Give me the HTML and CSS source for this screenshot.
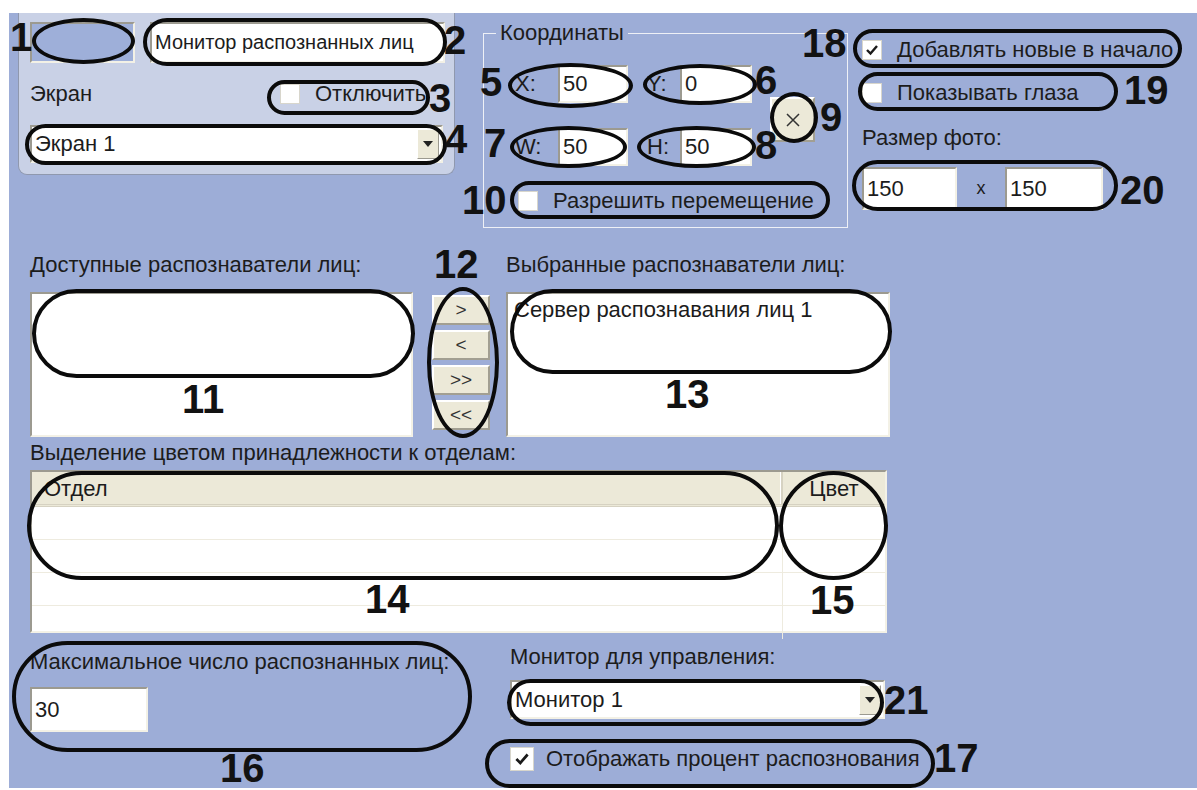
FILE: index.html
```html
<!DOCTYPE html>
<html lang="ru">
<head>
    <meta charset="UTF-8">
    <meta name="viewport" content="width=device-width, initial-scale=1.0">
    <title>Монитор распознанных лиц - настройки</title>
    <link rel="stylesheet" href="styles.css">
</head>
<body>
<div class="page">
    <div class="screen">

        <div class="top">
            <div class="panel">
                <div class="panel-row">
                    <div class="edit edit-id"></div>
                    <div class="edit edit-name">Монитор распознанных лиц</div>
                </div>
                <div class="screen-row">
                    <span class="screen-label">Экран</span>
                    <div class="check"><span class="box"></span>Отключить</div>
                </div>
                <div class="combo combo-screen">
                    <span>Экран 1</span>
                    <span class="drop"><svg width="12" height="8" viewBox="0 0 12 8"><path d="M1 1 L11 1 L6 7 Z" fill="#222"/></svg></span>
                </div>
            </div>

            <fieldset class="coords">
                <legend>Координаты</legend>
                <div class="coords-body">
                    <div class="coords-grid">
                        <span>X:</span><div class="edit">50</div><span class="lbl2">Y:</span><div class="edit">0</div>
                        <span>W:</span><div class="edit">50</div><span class="lbl2">H:</span><div class="edit">50</div>
                    </div>
                    <div class="btn btn-reset"><svg width="18" height="18" viewBox="0 0 18 18"><path d="M3 3 L15 15 M15 3 L3 15" stroke="#333" stroke-width="1.5"/></svg></div>
                </div>
                <div class="check check-move"><span class="box"></span>Разрешить перемещение</div>
            </fieldset>

            <div class="options">
                <div class="check"><span class="box"><svg width="16" height="16" viewBox="0 0 16 16"><path d="M3 8 L6.5 11.5 L13 4" stroke="#1a1a1a" stroke-width="2.4" fill="none"/></svg></span>Добавлять новые в начало</div>
                <div class="check check-eyes"><span class="box"></span>Показывать глаза</div>
                <div class="photo-label">Размер фото:</div>
                <div class="photo-size">
                    <div class="edit edit-w">150</div>
                    <span class="times">x</span>
                    <div class="edit edit-h">150</div>
                </div>
            </div>
        </div>

        <div class="lists">
            <div class="list-col">
                <div class="caption">Доступные распознаватели лиц:</div>
                <div class="listbox"></div>
            </div>
            <div class="move-buttons">
                <div class="btn">&gt;</div>
                <div class="btn">&lt;</div>
                <div class="btn">&gt;&gt;</div>
                <div class="btn">&lt;&lt;</div>
            </div>
            <div class="list-col list-right">
                <div class="caption">Выбранные распознаватели лиц:</div>
                <div class="listbox">
                    <div class="list-item">Сервер распознавания лиц 1</div>
                </div>
            </div>
        </div>

        <div class="dept">
            <div class="caption">Выделение цветом принадлежности к отделам:</div>
            <div class="grid">
                <div class="grid-head">
                    <div class="col-name">Отдел</div>
                    <div class="col-color">Цвет</div>
                </div>
                <div class="grid-row"><div class="col-name"></div><div class="col-color"></div></div>
                <div class="grid-row"><div class="col-name"></div><div class="col-color"></div></div>
                <div class="grid-row"><div class="col-name"></div><div class="col-color"></div></div>
                <div class="grid-row last"><div class="col-name"></div><div class="col-color"></div></div>
            </div>
        </div>

        <div class="bottom">
            <div class="max-col">
                <div class="caption">Максимальное число распознанных лиц:</div>
                <div class="edit edit-max">30</div>
            </div>
            <div class="monitor-col">
                <div class="caption">Монитор для управления:</div>
                <div class="combo combo-monitor">
                    <span>Монитор 1</span>
                    <span class="drop"><svg width="12" height="8" viewBox="0 0 12 8"><path d="M1 1 L11 1 L6 7 Z" fill="#222"/></svg></span>
                </div>
                <div class="check check-percent"><span class="box"><svg width="18" height="18" viewBox="0 0 16 16"><path d="M3 8 L6.5 11.5 L13 4" stroke="#1a1a1a" stroke-width="2.4" fill="none"/></svg></span>Отображать процент распознования</div>
            </div>
        </div>
    </div>

    <!-- annotation marks over the dialog -->
    <div class="marks">
        <div class="ring" style="left:32px;top:18px;width:103px;height:46px"></div>
        <div class="ring pill" style="left:143px;top:18px;width:304px;height:48px"></div>
        <div class="ring pill" style="left:267px;top:80px;width:163px;height:35px"></div>
        <div class="ring pill" style="left:25px;top:124px;width:422px;height:41px"></div>
        <div class="ring" style="left:508px;top:63px;width:125px;height:45px"></div>
        <div class="ring" style="left:643px;top:64px;width:114px;height:41px"></div>
        <div class="ring" style="left:510px;top:126px;width:117px;height:42px"></div>
        <div class="ring" style="left:637px;top:126px;width:119px;height:42px"></div>
        <div class="ring" style="left:770px;top:92px;width:48px;height:51px"></div>
        <div class="ring pill" style="left:510px;top:181px;width:320px;height:38px"></div>
        <div class="ring pill" style="left:32px;top:289px;width:383px;height:89px"></div>
        <div class="ring" style="left:427px;top:287px;width:72px;height:151px"></div>
        <div class="ring pill" style="left:510px;top:289px;width:382px;height:85px"></div>
        <div class="ring pill" style="left:27px;top:471px;width:752px;height:109px"></div>
        <div class="ring" style="left:779px;top:471px;width:109px;height:109px"></div>
        <div class="ring pill" style="left:12px;top:641px;width:460px;height:111px"></div>
        <div class="ring pill" style="left:485px;top:739px;width:450px;height:49px"></div>
        <div class="ring pill" style="left:853px;top:29px;width:329px;height:39px"></div>
        <div class="ring pill" style="left:858px;top:72px;width:260px;height:39px"></div>
        <div class="ring pill" style="left:852px;top:160px;width:266px;height:51px"></div>
        <div class="ring pill" style="left:507px;top:679px;width:377px;height:47px"></div>

        <span class="num" style="left:10px;top:21px">1</span>
        <span class="num" style="left:444px;top:24px">2</span>
        <span class="num" style="left:429px;top:82px">3</span>
        <span class="num" style="left:445px;top:123px">4</span>
        <span class="num" style="left:480px;top:66px">5</span>
        <span class="num" style="left:755px;top:64px">6</span>
        <span class="num" style="left:484px;top:127px">7</span>
        <span class="num" style="left:755px;top:129px">8</span>
        <span class="num" style="left:820px;top:101px">9</span>
        <span class="num" style="left:462px;top:184px">10</span>
        <span class="num" style="left:182px;top:383px">11</span>
        <span class="num" style="left:434px;top:248px">12</span>
        <span class="num" style="left:665px;top:378px">13</span>
        <span class="num" style="left:365px;top:583px">14</span>
        <span class="num" style="left:810px;top:584px">15</span>
        <span class="num" style="left:220px;top:752px">16</span>
        <span class="num" style="left:934px;top:742px">17</span>
        <span class="num" style="left:802px;top:27px">18</span>
        <span class="num" style="left:1124px;top:74px">19</span>
        <span class="num" style="left:1120px;top:174px">20</span>
        <span class="num" style="left:884px;top:684px">21</span>
    </div>
</div>
</body>
</html>
```

FILE: styles.css
```css
body {
    margin: 0;
    background: #fff;
    font-family: "Liberation Sans", Arial, sans-serif;
    font-size: 22px;
    color: #1c1c1c;
}

.page {
    position: relative;
    width: 1197px;
    height: 790px;
    padding: 13px 0 2px 9px;
    box-sizing: border-box;
    overflow: hidden;
}

.screen {
    width: 1188px;
    height: 775px;
    background: #9dadd7;
}

/* common controls */
.edit {
    box-sizing: border-box;
    height: 38px;
    background: #fff;
    border: 2px solid;
    border-color: #9c9a90 #f3f1e6 #f3f1e6 #9c9a90;
    padding: 0 3px;
    display: flex;
    align-items: center;
}

.combo {
    box-sizing: border-box;
    display: flex;
    align-items: center;
    justify-content: space-between;
    background: #fff;
    border: 2px solid;
    border-color: #9c9a90 #f3f1e6 #f3f1e6 #9c9a90;
    padding: 0 2px 0 3px;
}

.drop {
    width: 22px;
    height: 30px;
    box-sizing: border-box;
    background: #ece9d8;
    border: 1px solid;
    border-color: #fff #9c9a90 #9c9a90 #fff;
    display: flex;
    align-items: center;
    justify-content: center;
}

.btn {
    box-sizing: border-box;
    background: #ece9d8;
    border: 2px solid;
    border-color: #fff #a29f92 #a29f92 #fff;
    display: flex;
    align-items: center;
    justify-content: center;
    font-size: 19px;
    color: #333;
}

.check {
    display: flex;
    align-items: center;
    gap: 15px;
    height: 26px;
}

.box {
    width: 20px;
    height: 20px;
    box-sizing: border-box;
    background: #fff;
    border: 1px solid #d8d6cc;
    display: flex;
    align-items: center;
    justify-content: center;
}

.caption {
    height: 24px;
    line-height: 24px;
}

/* top part */
.top {
    display: flex;
    align-items: flex-start;
    height: 237px;
}

.panel {
    margin-left: 9px;
    width: 437px;
    height: 162px;
    box-sizing: border-box;
    background: #c9d1e6;
    border: 1px solid #8f98ae;
    border-top: none;
    border-radius: 0 0 9px 9px;
    padding: 9px 0 0 11px;
}

.panel-row {
    display: flex;
    gap: 15px;
}

.edit-id {
    width: 105px;
    height: 41px;
    background: #9eafd9;
}

.edit-name {
    width: 295px;
    height: 41px;
    font-size: 20px;
}

.screen-row {
    display: flex;
    align-items: center;
    margin-top: 17px;
    height: 28px;
}

.screen-label {
    width: 250px;
}

.combo-screen {
    margin-top: 17px;
    width: 413px;
    height: 38px;
}

.coords {
    margin: 9px 0 0 28px;
    width: 365px;
    height: 206px;
    box-sizing: border-box;
    border: 1px solid #eef0f6;
    padding: 21px 0 0 0;
    min-width: 0;
}

.coords legend {
    margin-left: 12px;
    padding: 0 4px;
    line-height: 22px;
}

.coords-body {
    display: flex;
    align-items: center;
    padding-left: 31px;
}

.coords-grid {
    display: grid;
    grid-template-columns: 43px 70px 52px 72px;
    row-gap: 25px;
    align-items: center;
}

.coords-grid .lbl2 {
    padding-left: 19px;
}

.btn-reset {
    margin: 8px 0 0 18px;
    width: 45px;
    height: 45px;
}

.check-move {
    margin: 22px 0 0 34px;
}

.options {
    margin: 24px 0 0 14px;
}

.check-eyes {
    margin-top: 17px;
}

.photo-label {
    margin-top: 20px;
    line-height: 24px;
}

.photo-size {
    display: flex;
    align-items: center;
    margin-top: 17px;
}

.photo-size .edit {
    height: 43px;
}

.edit-w {
    width: 95px;
}

.edit-h {
    width: 98px;
}

.times {
    width: 48px;
    text-align: center;
    font-size: 18px;
}

/* lists */
.lists {
    display: flex;
    margin-left: 21px;
    padding-top: 3px;
    height: 184px;
    box-sizing: border-box;
}

.list-col {
    width: 383px;
}

.list-right {
    margin-left: 16px;
    width: 384px;
}

.listbox {
    margin-top: 15px;
    height: 145px;
    box-sizing: border-box;
    background: #fff;
    border: 2px solid;
    border-color: #9c9a90 #f3f1e6 #f3f1e6 #9c9a90;
}

.list-item {
    padding: 6px 6px;
    line-height: 20px;
}

.move-buttons {
    margin: 42px 0 0 19px;
    width: 58px;
    display: flex;
    flex-direction: column;
    gap: 5px;
}

.move-buttons .btn {
    height: 30px;
}

/* department colours */
.dept {
    margin-left: 21px;
    padding-top: 7px;
}

.grid {
    margin-top: 5px;
    width: 857px;
    height: 163px;
    box-sizing: border-box;
    background: #fff;
    border: 2px solid;
    border-color: #9c9a90 #f3f1e6 #f3f1e6 #9c9a90;
}

.grid-head,
.grid-row {
    display: flex;
}

.grid-head {
    height: 35px;
    background: #ece9d8;
    border-bottom: 3px double #d6d2c2;
    box-sizing: border-box;
    line-height: 33px;
}

.grid-head .col-name {
    padding-left: 12px;
    border-right: 2px solid #d6d2c2;
    box-shadow: inset -1px 0 0 #fff;
}

.grid-head .col-color {
    text-align: center;
}

.col-name {
    width: 751px;
    box-sizing: border-box;
}

.col-color {
    flex: 1;
}

.grid-row {
    height: 33px;
    box-sizing: border-box;
    border-bottom: 1px solid #eeebdf;
}

.grid-row .col-name {
    border-right: 1px solid #eeebdf;
}

.grid-row.last {
    border-bottom: none;
}

/* bottom part */
.bottom {
    display: flex;
    margin-left: 21px;
}

.max-col {
    width: 480px;
    padding-top: 17px;
}

.edit-max {
    margin-top: 13px;
    width: 118px;
    height: 45px;
}

.monitor-col {
    padding-top: 12px;
}

.combo-monitor {
    margin-top: 11px;
    width: 375px;
    height: 39px;
}

.check-percent {
    margin-top: 27px;
    gap: 12px;
}

.check-percent .box {
    width: 24px;
    height: 24px;
}

/* annotation layer */
.marks {
    position: absolute;
    left: 0;
    top: 0;
    width: 100%;
    height: 100%;
    pointer-events: none;
}

.ring {
    position: absolute;
    box-sizing: border-box;
    border: 4px solid #0b0b0b;
    border-radius: 50%;
}

.ring.pill {
    border-radius: 999px;
}

.num {
    position: absolute;
    font-family: "Liberation Sans", Arial, sans-serif;
    font-weight: bold;
    font-size: 40px;
    line-height: 0.8;
    color: #121212;
}
```
